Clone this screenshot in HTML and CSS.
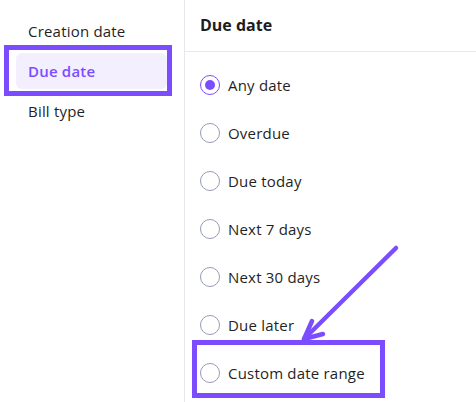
FILE: index.html
```html
<!DOCTYPE html>
<html>
<head>
<meta charset="utf-8">
<link rel="stylesheet" href="styles.css">
</head>
<body>
<div class="layout">
  <nav class="sidebar">
    <div class="nav-item">Creation date</div>
    <div class="nav-item active">Due date</div>
    <div class="nav-item">Bill type</div>
  </nav>
  <section class="panel">
    <header class="panel-head">Due date</header>
    <ul class="options">
      <li class="option"><span class="radio checked"></span>Any date</li>
      <li class="option"><span class="radio"></span>Overdue</li>
      <li class="option"><span class="radio"></span>Due today</li>
      <li class="option"><span class="radio"></span>Next 7 days</li>
      <li class="option"><span class="radio"></span>Next 30 days</li>
      <li class="option"><span class="radio"></span>Due later</li>
      <li class="option marked"><span class="radio"></span>Custom date range</li>
    </ul>
  </section>
</div>
<svg class="arrow" width="476" height="402" viewBox="0 0 476 402">
  <g fill="none" stroke="#7b4dff" stroke-width="4.5" stroke-linecap="round" stroke-linejoin="round">
    <path d="M396 248 L304 339"/>
    <path d="M312 321 L304 339 L323 334"/>
  </g>
</svg>
</body>
</html>
```
FILE: styles.css
```css
*, *::before, *::after { box-sizing: border-box; }
html, body {
  margin: 0;
  padding: 0;
  width: 476px;
  height: 402px;
  overflow: hidden;
  background: #ffffff;
  font-family: "Open Sans", "DejaVu Sans", sans-serif;
  color: #1f1f24;
}
.layout {
  display: flex;
  height: 402px;
}
.sidebar {
  width: 184px;
  flex: none;
  padding: 13px 17px 0 16px;
  display: flex;
  flex-direction: column;
  gap: 4px;
}
.nav-item {
  position: relative;
  height: 36px;
  line-height: 36px;
  padding-left: 12px;
  font-size: 15px;
  letter-spacing: 0.2px;
  border-radius: 6px;
}
.nav-item.active {
  background: #f3effe;
  color: #7b4dff;
  font-weight: 600;
}
.nav-item.active::after {
  content: "";
  position: absolute;
  left: -12px;
  right: -5px;
  top: -8px;
  bottom: -7px;
  border: 5px solid #7b4dff;
}
.panel {
  flex: 1;
  border-left: 1px solid #e6e8ee;
}
.panel-head {
  height: 52px;
  border-bottom: 1px solid #e6e8ee;
  padding-left: 15px;
  line-height: 50px;
  font-size: 16px;
  font-weight: 700;
  color: #1c1c21;
}
.options {
  list-style: none;
  margin: 0;
  padding: 9px 0 0 15px;
}
.option {
  position: relative;
  height: 48px;
  display: flex;
  align-items: center;
  gap: 8px;
  font-size: 15px;
  letter-spacing: 0.2px;
}
.radio {
  width: 20px;
  height: 20px;
  border-radius: 50%;
  border: 1.5px solid #959bb2;
  flex: none;
  display: flex;
  align-items: center;
  justify-content: center;
}
.radio.checked {
  border-color: #7b4dff;
}
.radio.checked::before {
  content: "";
  width: 10px;
  height: 10px;
  border-radius: 50%;
  background: #7b4dff;
}
.option.marked::after {
  content: "";
  position: absolute;
  left: -8px;
  top: -9px;
  width: 193px;
  height: 58px;
  border: 5px solid #7b4dff;
}
.arrow {
  position: absolute;
  left: 0;
  top: 0;
  pointer-events: none;
}
```
